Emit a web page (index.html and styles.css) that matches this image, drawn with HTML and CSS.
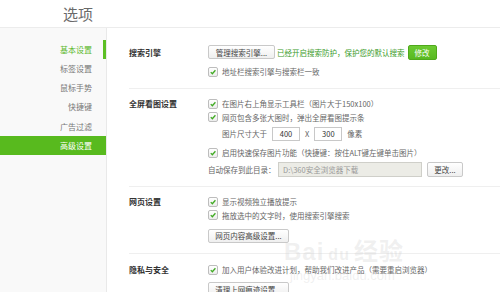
FILE: index.html
```html
<!DOCTYPE html>
<html lang="zh-CN">
<head>
<meta charset="utf-8">
<title>选项</title>
<link rel="stylesheet" href="styles.css">
</head>
<body>
<div class="app">
  <header class="top">
    <div class="title">选项</div>
  </header>
  <div class="body">
    <nav class="side">
      <div class="nav-item current">基本设置</div>
      <div class="nav-item">标签设置</div>
      <div class="nav-item">鼠标手势</div>
      <div class="nav-item">快捷键</div>
      <div class="nav-item">广告过滤</div>
      <div class="nav-item active">高级设置</div>
    </nav>
    <main class="main">
      <section class="sec sec-search">
        <div class="sec-label">搜索引擎</div>
        <div class="sec-body">
          <div class="row row-btn">
            <span class="btn btn-manage">管理搜索引擎...</span>
            <span class="ok-text">已经开启搜索防护，保护您的默认搜索</span>
            <span class="btn btn-green">修改</span>
          </div>
          <div class="row row-gap6">
            <span class="cb"><svg viewBox="0 0 10 10" width="10" height="10"><path d="M2.2 5.2 L4.2 7.2 L8 2.8" fill="none" stroke="#3faa22" stroke-width="1.6"/></svg></span>
            <span class="txt">地址栏搜索引擎与搜索栏一致</span>
          </div>
        </div>
      </section>

      <section class="sec sec-full">
        <div class="sec-label">全屏看图设置</div>
        <div class="sec-body">
          <div class="row">
            <span class="cb"><svg viewBox="0 0 10 10" width="10" height="10"><path d="M2.2 5.2 L4.2 7.2 L8 2.8" fill="none" stroke="#3faa22" stroke-width="1.6"/></svg></span>
            <span class="txt">在图片右上角显示工具栏（图片大于150x100）</span>
          </div>
          <div class="row">
            <span class="cb"><svg viewBox="0 0 10 10" width="10" height="10"><path d="M2.2 5.2 L4.2 7.2 L8 2.8" fill="none" stroke="#3faa22" stroke-width="1.6"/></svg></span>
            <span class="txt">网页包含多张大图时，弹出全屏看图提示条</span>
          </div>
          <div class="row row-size">
            <span class="txt">图片尺寸大于</span>
            <span class="num">400</span>
            <span class="txt x">X</span>
            <span class="num">300</span>
            <span class="txt">像素</span>
          </div>
          <div class="row row-h14">
            <span class="cb"><svg viewBox="0 0 10 10" width="10" height="10"><path d="M2.2 5.2 L4.2 7.2 L8 2.8" fill="none" stroke="#3faa22" stroke-width="1.6"/></svg></span>
            <span class="txt">启用快速保存图片功能（快捷键：按住ALT键左键单击图片）</span>
          </div>
          <div class="row row-dir">
            <span class="txt dir-label">自动保存到此目录：</span>
            <span class="path">D:\360安全浏览器下载</span>
            <span class="btn btn-change">更改...</span>
          </div>
        </div>
      </section>

      <section class="sec sec-web">
        <div class="sec-label">网页设置</div>
        <div class="sec-body">
          <div class="row">
            <span class="cb"><svg viewBox="0 0 10 10" width="10" height="10"><path d="M2.2 5.2 L4.2 7.2 L8 2.8" fill="none" stroke="#3faa22" stroke-width="1.6"/></svg></span>
            <span class="txt">显示视频独立播放提示</span>
          </div>
          <div class="row">
            <span class="cb"><svg viewBox="0 0 10 10" width="10" height="10"><path d="M2.2 5.2 L4.2 7.2 L8 2.8" fill="none" stroke="#3faa22" stroke-width="1.6"/></svg></span>
            <span class="txt">拖放选中的文字时，使用搜索引擎搜索</span>
          </div>
          <div class="row row-btn row-gap7">
            <span class="btn btn-wide">网页内容高级设置...</span>
          </div>
        </div>
      </section>

      <section class="sec sec-privacy">
        <div class="sec-label">隐私与安全</div>
        <div class="sec-body">
          <div class="row">
            <span class="cb"><svg viewBox="0 0 10 10" width="10" height="10"><path d="M2.2 5.2 L4.2 7.2 L8 2.8" fill="none" stroke="#3faa22" stroke-width="1.6"/></svg></span>
            <span class="txt">加入用户体验改进计划，帮助我们改进产品（需要重启浏览器）</span>
          </div>
          <div class="row row-btn row-gap6">
            <span class="btn btn-wide">清理上网痕迹设置...</span>
          </div>
        </div>
      </section>
    </main>
  </div>
  <div class="watermark">
    <div class="wm-logo">Bai<span class="wm-paw">du</span>经验</div>
    <div class="wm-url">jingyan.baidu.com</div>
  </div>
</div>
</body>
</html>
```

FILE: styles.css
```css
* { box-sizing: border-box; }

html, body {
  margin: 0;
  padding: 0;
  background: #fff;
}

body {
  width: 500px;
  height: 292px;
  overflow: hidden;
  font-family: "Noto Sans CJK SC", "Noto Sans", sans-serif;
  color: #666;
}

.app {
  position: relative;
  width: 500px;
  height: 292px;
  overflow: hidden;
}

.top {
  height: 28px;
  border-bottom: 1px solid #ececec;
}

.title {
  width: 106px;
  padding-right: 13px;
  text-align: right;
  font-size: 15px;
  line-height: 27px;
  color: #6a6a6a;
}

.body {
  display: flex;
  height: 264px;
}

.side {
  width: 107px;
  flex: none;
  background: #f9f9f9;
  border-right: 1px solid #e9e9e9;
  padding-top: 11.5px;
}

.nav-item {
  height: 19.3px;
  line-height: 19.3px;
  font-size: 8px;
  text-align: right;
  padding-right: 14px;
  color: #777;
}

.nav-item.current {
  color: #5bb82c;
  box-shadow: inset -3px 0 0 #5cbf24;
}

.nav-item.active {
  background: #58ba1e;
  color: #fff;
}

.main {
  flex: 1;
  min-width: 0;
}

.sec {
  display: flex;
  margin-left: 22px;
  border-bottom: 1px solid #efefef;
}

.sec-label {
  width: 79px;
  flex: none;
  font-size: 8px;
  font-weight: bold;
  color: #333;
}

.sec-body {
  flex: 1;
  display: flex;
  flex-direction: column;
}

.sec-search { padding-top: 17px; height: 61px; }
.sec-search .sec-label { line-height: 15px; }

.sec-full { padding-top: 8px; height: 98px; }
.sec-full .sec-label { line-height: 13px; }

.sec-web { padding-top: 8px; height: 67px; }
.sec-web .sec-label { line-height: 13px; }

.sec-privacy { padding-top: 9px; border-bottom: none; }
.sec-privacy .sec-label { line-height: 13px; }

.row {
  display: flex;
  align-items: center;
  height: 13.4px;
  font-size: 7.5px;
  white-space: nowrap;
}

.row-btn { height: 14px; }
.row-gap6 { margin-top: 6px; }
.row-gap7 { margin-top: 7px; }
.row-h14 { height: 14px; margin-top: 2px; }
.row-size { height: 20px; padding-left: 14px; margin-top: 0; }
.row-dir { height: 20px; }

.txt {
  color: #666;
}

.cb {
  width: 10px;
  height: 10px;
  flex: none;
  border: 1px solid #bdbdbd;
  border-radius: 2px;
  background: linear-gradient(#ffffff, #ececec);
  margin-right: 4px;
  display: flex;
  align-items: center;
  justify-content: center;
}

.cb svg {
  display: block;
  width: 8px;
  height: 8px;
}

.btn {
  display: inline-flex;
  align-items: center;
  justify-content: center;
  height: 14px;
  border: 1px solid #c9c9c9;
  border-radius: 2px;
  background: linear-gradient(#ffffff, #efefef);
  color: #444;
  font-size: 7.5px;
  flex: none;
}

.btn-manage { width: 67px; margin-right: 2px; }

.ok-text {
  color: #3a9b2a;
  margin-right: 3px;
}

.btn-green {
  width: 29px;
  height: 15px;
  background: linear-gradient(#6ccb32, #58b921);
  border-color: #4fa81c;
  color: #fff;
}

.num {
  width: 28px;
  height: 14px;
  border: 1px solid #c8c8c8;
  background: #fff;
  color: #333;
  display: inline-flex;
  align-items: center;
  justify-content: center;
  margin-left: 5px;
  flex: none;
}

.x {
  margin-left: 5px;
  margin-right: 0;
}

.num + .txt {
  margin-left: 5px;
}

.dir-label {
  width: 70px;
  flex: none;
}

.path {
  width: 144px;
  height: 15px;
  border: 1px solid #cfcfc9;
  background: #ececE6;
  color: #999;
  display: inline-flex;
  align-items: center;
  padding-left: 4px;
  flex: none;
}

.btn-change {
  width: 36px;
  height: 15px;
  margin-left: 5px;
}

.btn-wide {
  width: 81px;
}

.watermark {
  position: absolute;
  left: 284px;
  top: 238px;
  color: rgba(205, 205, 205, 0.3);
  font-family: "Liberation Sans", "Noto Sans CJK SC", sans-serif;
  pointer-events: none;
}

.wm-logo {
  font-size: 24px;
  line-height: 28px;
  font-weight: bold;
  letter-spacing: 1px;
}

.wm-paw {
  font-size: 16px;
  margin: 0 4px;
}

.wm-url {
  font-size: 13px;
  line-height: 14px;
  padding-left: 6px;
}
```
